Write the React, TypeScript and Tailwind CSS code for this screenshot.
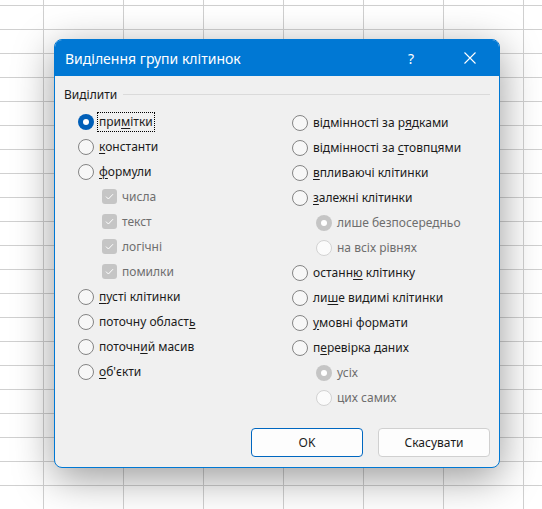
import React, { FC } from 'react';

type Item = {
    label: string;
    u?: number;
    kind: 'radio' | 'check';
    sub?: boolean;
    checked?: boolean;
    disabled?: boolean;
    focused?: boolean;
};

const leftItems: Item[] = [
    { label: 'примітки', u: 3, kind: 'radio', checked: true, focused: true },
    { label: 'константи', u: 0, kind: 'radio' },
    { label: 'формули', u: 0, kind: 'radio' },
    { label: 'числа', kind: 'check', sub: true, checked: true, disabled: true },
    { label: 'текст', kind: 'check', sub: true, checked: true, disabled: true },
    { label: 'логічні', kind: 'check', sub: true, checked: true, disabled: true },
    { label: 'помилки', kind: 'check', sub: true, checked: true, disabled: true },
    { label: 'пусті клітинки', u: 0, kind: 'radio' },
    { label: 'поточну область', u: 14, kind: 'radio' },
    { label: 'поточний масив', u: 6, kind: 'radio' },
    { label: "об'єкти", u: 0, kind: 'radio' },
];

const rightItems: Item[] = [
    { label: 'відмінності за рядками', u: 16, kind: 'radio' },
    { label: 'відмінності за стовпцями', u: 15, kind: 'radio' },
    { label: 'впливаючі клітинки', u: 0, kind: 'radio' },
    { label: 'залежні клітинки', u: 0, kind: 'radio' },
    { label: 'лише безпосередньо', kind: 'radio', sub: true, checked: true, disabled: true },
    { label: 'на всіх рівнях', kind: 'radio', sub: true, disabled: true },
    { label: 'останню клітинку', u: 6, kind: 'radio' },
    { label: 'лише видимі клітинки', u: 2, kind: 'radio' },
    { label: 'умовні формати', u: 0, kind: 'radio' },
    { label: 'перевірка даних', u: 1, kind: 'radio' },
    { label: 'усіх', kind: 'radio', sub: true, checked: true, disabled: true },
    { label: 'цих самих', kind: 'radio', sub: true, disabled: true },
];

const Radio: FC<{ checked?: boolean; disabled?: boolean }> = ({ checked, disabled }) => {
    if (checked) {
        return (
            <span
                className={`flex h-4 w-4 shrink-0 items-center justify-center rounded-full ${
                    disabled ? 'bg-[#c5c5c5]' : 'bg-[#005fb8]'
                }`}
            >
                <span className="h-[6px] w-[6px] rounded-full bg-white" />
            </span>
        );
    }
    return (
        <span
            className={`h-4 w-4 shrink-0 rounded-full border ${
                disabled ? 'border-[#d2d2d2] bg-[#fbfbfb]' : 'border-[#848484] bg-[#f7f7f7]'
            }`}
        />
    );
};

const Check: FC = () => (
    <span className="flex h-[15px] w-[15px] shrink-0 items-center justify-center rounded-[3px] bg-[#c5c5c5]">
        <svg width="9" height="7" viewBox="0 0 9 7" fill="none">
            <path d="M1 3.6 L3.4 6 L8 1.2" stroke="#ffffff" strokeWidth="1" />
        </svg>
    </span>
);

const Label: FC<{ item: Item }> = ({ item }) => {
    const { label, u } = item;
    const content =
        u === undefined ? (
            label
        ) : (
            <>
                {label.slice(0, u)}
                <span className="underline underline-offset-2">{label[u]}</span>
                {label.slice(u + 1)}
            </>
        );
    return (
        <span
            className={`border px-px leading-[18px] ${
                item.focused ? 'border-dotted border-black' : 'border-transparent'
            } ${item.disabled ? 'text-[#6e6e6e]' : 'text-[#1b1b1b]'}`}
        >
            {content}
        </span>
    );
};

const Row: FC<{ item: Item }> = ({ item }) => (
    <div className={`flex h-[25px] items-center gap-[3px] ${item.sub ? 'pl-6' : ''}`}>
        {item.kind === 'radio' ? <Radio checked={item.checked} disabled={item.disabled} /> : <Check />}
        <Label item={item} />
    </div>
);

const App: FC = () => {
    return (
        <div className="h-[509px] w-[542px] overflow-hidden bg-white bg-[linear-gradient(to_right,#d0d0d0_1px,transparent_1px),linear-gradient(to_bottom,#d0d0d0_1px,transparent_1px)] bg-size-[80px_24px] bg-position-[43px_5px] pl-[54px] pt-[39px] font-['Noto_Sans',sans-serif] text-[12px]">
            <div className="flex h-[429px] w-[446px] flex-col overflow-hidden rounded-lg border border-[#0078d4] bg-[#f0f0f0] shadow-[0_10px_40px_rgba(0,0,0,0.4)]">
                <div className="flex h-[36px] shrink-0 items-center bg-[#0078d4] pl-[10px] text-white">
                    <span className="text-[14px]">Виділення групи клітинок</span>
                    <span className="ml-auto w-[20px] text-center text-[14px]">?</span>
                    <span className="ml-[43px] mr-[23px] flex h-3 w-3 items-center justify-center">
                        <svg width="12" height="12" viewBox="0 0 12 12">
                            <path d="M0.5 0.5 L11.5 11.5 M11.5 0.5 L0.5 11.5" stroke="#ffffff" strokeWidth="1.1" />
                        </svg>
                    </span>
                </div>
                <div className="flex flex-1 flex-col px-[9px] pt-[9px]">
                    <div className="flex items-center gap-[6px]">
                        <span className="leading-[19px] text-[#1b1b1b]">Виділити</span>
                        <span className="h-px flex-1 bg-[#dadada]" />
                    </div>
                    <div className="mt-[5px] grid grid-cols-[214px_1fr] pl-[14px]">
                        <div className="flex flex-col">
                            {leftItems.map((item) => (
                                <Row key={item.label} item={item} />
                            ))}
                        </div>
                        <div className="flex flex-col pt-px">
                            {rightItems.map((item) => (
                                <Row key={item.label} item={item} />
                            ))}
                        </div>
                    </div>
                    <div className="mt-auto flex justify-end gap-[15px] pb-[10px]">
                        <button className="h-[29px] w-[112px] rounded-[4px] border border-[#0067c0] bg-[#fdfdfd] text-[#1b1b1b]">
                            OK
                        </button>
                        <button className="h-[29px] w-[112px] rounded-[4px] border border-[#d0d0d0] bg-[#fdfdfd] text-[#1b1b1b]">
                            Скасувати
                        </button>
                    </div>
                </div>
            </div>
        </div>
    );
};

export default App;
